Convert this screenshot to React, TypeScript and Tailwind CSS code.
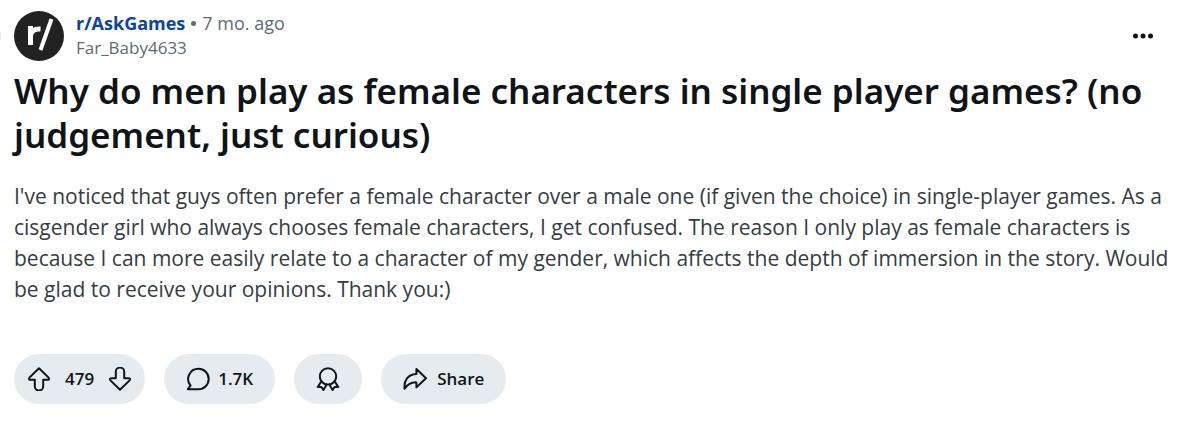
import type { ReactNode } from "react";

const post = {
  community: "r/AskGames",
  age: "7 mo. ago",
  author: "Far_Baby4633",
  title: "Why do men play as female characters in single player games? (no judgement, just curious)",
  body: "I've noticed that guys often prefer a female character over a male one (if given the choice) in single-player games. As a cisgender girl who always chooses female characters, I get confused. The reason I only play as female characters is because I can more easily relate to a character of my gender, which affects the depth of immersion in the story. Would be glad to receive your opinions. Thank you:)",
  votes: "479",
  comments: "1.7K",
};

function Icon({ children }: { children: ReactNode }) {
  return (
    <svg
      viewBox="0 0 24 24"
      className="size-6 shrink-0"
      fill="none"
      stroke="currentColor"
      strokeWidth="2"
      strokeLinejoin="round"
      aria-hidden="true"
    >
      {children}
    </svg>
  );
}

const ARROW_UP =
  "M12 1.2 L21.6 10.6 Q22.6 12.6 21 12.8 H16.2 V19.2 A4.2 4.2 0 0 1 7.8 19.2 V12.8 H3 Q1.4 12.6 2.4 10.6 Z";

function CommunityAvatar() {
  return (
    <svg viewBox="0 0 50 50" className="size-[50px] shrink-0" aria-hidden="true">
      <circle cx="25" cy="25" r="25" fill="#222222" />
      <path d="M16.5 34 V15 M16.5 26 Q16.5 17.6 26.5 18" fill="none" stroke="#fff" strokeWidth="5" />
      <path d="M37.5 8 L26.5 39" fill="none" stroke="#fff" strokeWidth="4" />
    </svg>
  );
}

export default function App() {
  return (
    <main className="relative overflow-hidden bg-white pt-[11px] pr-2 pb-7 pl-3.5 font-['Open_Sans','Noto_Sans',sans-serif] text-[#0f1418]">
      <span className="absolute top-3 -left-[47px] size-12 rounded-full bg-[#e5ebee]" />
      <article>
        <header className="flex items-center justify-between">
          <div className="flex items-center gap-3">
            <CommunityAvatar />
            <div>
              <div className="flex items-center gap-1.5 text-lg leading-6 text-[#5c6c74]">
                <a href="#community" className="font-bold text-[#0a449b]">
                  {post.community}
                </a>
                <span className="size-[5px] rounded-full bg-[#5c6c74]" />
                <time>{post.age}</time>
              </div>
              <a href="#author" className="block text-[17px] leading-[26px] text-[#5c6c74]">
                {post.author}
              </a>
            </div>
          </div>
          <button type="button" aria-label="More options" className="mr-3 p-1">
            <svg viewBox="0 0 24 24" className="size-6" fill="currentColor" aria-hidden="true">
              <circle cx="4.5" cy="12" r="2.5" />
              <circle cx="12" cy="12" r="2.5" />
              <circle cx="19.5" cy="12" r="2.5" />
            </svg>
          </button>
        </header>

        <h1 className="mt-2 font-['Noto_Sans',sans-serif] text-[35px] leading-11 font-semibold">
          {post.title}
        </h1>

        <p className="mt-6 text-[21px] leading-[31px] text-[#333d42]">{post.body}</p>

        <div className="mt-[49px] flex gap-[19px] text-[17px] font-semibold">
          <div className="flex h-[50px] items-center gap-3.5 rounded-full bg-[#e5ebee] px-[13px]">
            <button type="button" aria-label="Upvote">
              <Icon>
                <path d={ARROW_UP} />
              </Icon>
            </button>
            <span>{post.votes}</span>
            <button type="button" aria-label="Downvote">
              <Icon>
                <path d={ARROW_UP} transform="rotate(180 12 12)" />
              </Icon>
            </button>
          </div>
          <button type="button" className="flex h-[50px] items-center gap-2 rounded-full bg-[#e5ebee] px-[22px]">
            <Icon>
              <path d="M12.5 1.8 A10.2 10.2 0 1 1 12.5 22.2 H1.8 L4.6 18.6 A10.2 10.2 0 0 1 12.5 1.8 Z" />
            </Icon>
            {post.comments}
          </button>
          <button
            type="button"
            aria-label="Give award"
            className="flex h-[50px] items-center rounded-full bg-[#e5ebee] px-[22px]"
          >
            <Icon>
              <circle cx="12" cy="9.4" r="8.2" />
              <path d="M5.2 14.4 L1.8 20 L5.4 20 L7.4 23 L10.6 17.6 M18.8 14.4 L22.2 20 L18.6 20 L16.6 23 L13.4 17.6" />
            </Icon>
          </button>
          <button type="button" className="flex h-[50px] items-center gap-2.5 rounded-full bg-[#e5ebee] px-[22px]">
            <Icon>
              <path d="M13.4 2 L23 11.2 L13.4 20.4 V15.4 C8 15 4.6 17.4 1.6 21.8 C0.6 13.6 5 7.4 13.4 7 Z" />
            </Icon>
            Share
          </button>
        </div>
      </article>
    </main>
  );
}
